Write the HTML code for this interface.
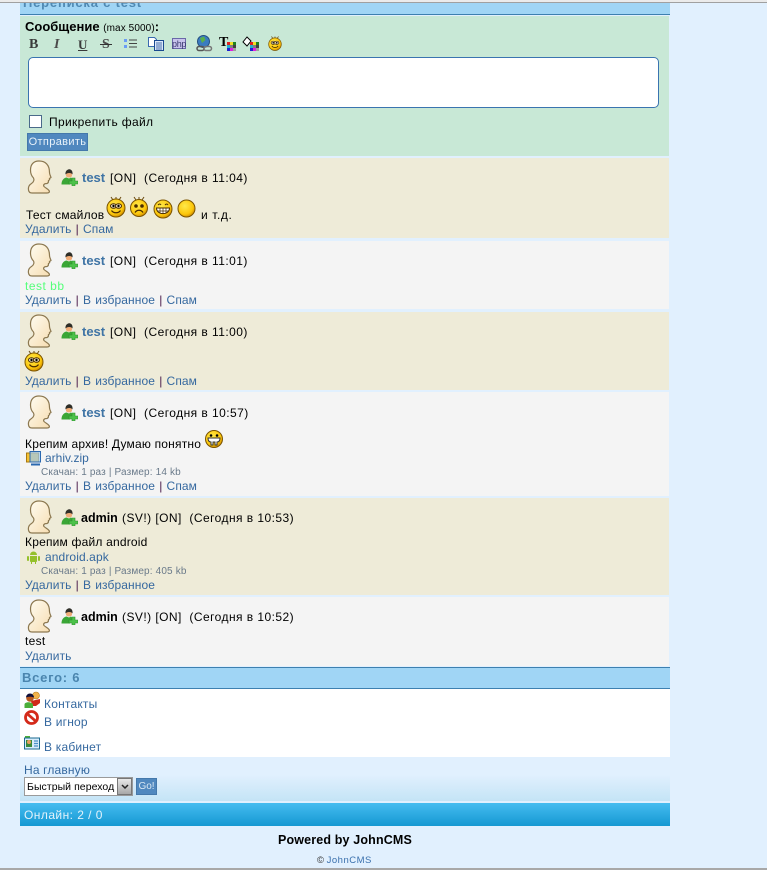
<!DOCTYPE html>
<html lang="ru"><head><meta charset="utf-8"><title>Переписка</title>
<style>
html,body{margin:0;padding:0;}
body{width:767px;height:870px;position:relative;overflow:hidden;background:#e1f0fe;font-family:"Liberation Sans","DejaVu Sans",sans-serif;font-size:12px;color:#000;}
.b{position:absolute;}
.t{position:absolute;white-space:nowrap;line-height:14px;}
a,.l{color:#35689f;text-decoration:none;}
.s{color:#4a1a4a;}
svg{position:absolute;overflow:visible;}
.n{font-weight:bold;}
.d{letter-spacing:.45px;}
.m{letter-spacing:.1px;word-spacing:.7px;}
.f{font-size:10px;color:#6a7a8a;letter-spacing:.15px;}
</style></head><body>
<svg width="0" height="0" style="position:absolute"><defs>
<radialGradient id="y" cx=".4" cy=".35" r=".7"><stop offset="0" stop-color="#ffe94a"/><stop offset=".7" stop-color="#fcc60a"/><stop offset="1" stop-color="#c88200"/></radialGradient>
<linearGradient id="av" x1="0" y1="0" x2="1" y2="1"><stop offset="0" stop-color="#fffdf2"/><stop offset="1" stop-color="#f6dcb0"/></linearGradient>
<symbol id="avatar" viewBox="0 0 28 34"><path d="M13 1C7.500 1 4.500 4.500 4.500 10c0 3.500 1 6 3 8 .8 1.500.5 4-2 5.500C3 25 2 27 2.500 30c.3 2 1.500 3 3.500 3h15c2 0 3-1 2-2.500-1-1.500-3.500-2.500-5-4-1-1.500 0-3 3-3 1.500-.5 1.500-1.500 1.500-3 1-.5 1.500-1 1-2l1.500-1c-.3-1.500-1.500-3-1.500-5C23.500 5 19.500 1 13 1z" fill="url(#av)" stroke="#8c7850" stroke-width="1.200"/></symbol>
<symbol id="user" viewBox="0 0 17 17"><path d="M5 2.500C6 .5 10 .5 11 2.500v4.500c-1 2-5 2-6 0z" fill="#f0ac78"/><path d="M4.500 5.500C4 1.500 7 .3 8.500 .3S12 2 11.500 5.500C10.500 3.500 6 3.500 4.500 5.500z" fill="#2e2e28"/><path d="M.5 15.500c0-4 2-6.500 5-7l2.500 1 2-1 2 2v2h-3v3z" fill="#3aa636"/><path d="M11 9h3v3h3v3h-3v2h-3v-2H8v-3h3z" fill="#4cc24a" stroke="#2c8d2c" stroke-width=".6"/></symbol>
<symbol id="sm" viewBox="0 0 20 22"><path d="M7 4L5 1M10 4V1M13 4l2-3" stroke="#6a4a10" fill="none"/><circle cx="10" cy="12" r="9" fill="url(#y)" stroke="#7a5400"/><ellipse cx="7.500" cy="10" rx="3" ry="2.300" fill="#f4e8c8" stroke="#4a2c00"/><ellipse cx="12.500" cy="10" rx="3" ry="2.300" fill="#f4e8c8" stroke="#4a2c00"/><circle cx="7.500" cy="10" r="1.200"/><circle cx="12.500" cy="10" r="1.200"/><path d="M5.500 14.500c2 3 7 3 9 0" stroke="#4a2c00" stroke-width="1.200" fill="none"/></symbol>
</defs></svg>

<!-- page lines -->
<div class="b" style="left:0;top:0;width:767px;height:2px;background:#ebebeb"></div>
<div class="b" style="left:0;top:2px;width:767px;height:1px;background:#a0a0a0"></div>
<div class="b" style="left:0;top:868px;width:767px;height:2px;background:#a8a8a8"></div>

<!-- header -->
<div class="b" style="left:20px;top:3px;width:650px;height:11px;background:#a0d5f5;border-bottom:1px solid #3d80b0;overflow:hidden">
<div class="t n" style="left:3px;top:-7px;color:#4f89b3;font-size:13px;letter-spacing:.8px">Переписка с test</div></div>

<!-- form -->
<div class="b" style="left:20px;top:16px;width:649px;height:140px;background:#c8e8d6"></div>
<div class="t n" style="left:25px;top:20px;font-size:13px;color:#000">Сообщение <span style="font-weight:normal;font-size:10px;letter-spacing:.1px">(max 5000)</span>:</div>
<div class="t" style="left:29px;top:37px;font:bold 14px 'Liberation Serif',serif;color:#3a3a3a">B</div>
<div class="t" style="left:54px;top:37px;font:italic bold 14px 'Liberation Serif',serif;color:#4a4a4a">I</div>
<div class="t" style="left:78px;top:37px;font:bold 13px 'Liberation Serif',serif;color:#3a3a3a;text-decoration:underline">U</div>
<div class="t" style="left:102px;top:37px;font:bold 14px 'Liberation Serif',serif;color:#4a4a4a">S</div>
<div class="b" style="left:100px;top:44px;width:12px;height:1px;background:#333"></div>
<svg style="left:124px;top:38px" width="14" height="12"><rect x="0" y="1" width="3" height="3" fill="#6a9cf5"/><rect x="0" y="7" width="3" height="3" fill="#6a9cf5"/><path d="M5 2h8M5 5.500h8M5 9h8" stroke="#444" fill="none"/></svg>
<svg style="left:148px;top:37px" width="16" height="14"><path d="M.5.500h6l2 2v7h-8z" fill="#fff" stroke="#3a6ab0"/><rect x="6.500" y="3.500" width="9" height="10" fill="#dce8fa" stroke="#1a4a90"/><path d="M8 6h6M8 8h6M8 10h6M8 12h6" stroke="#1a4a90" stroke-width=".8"/></svg>
<svg style="left:172px;top:38px" width="14" height="12"><rect x=".5" y=".5" width="13" height="10" fill="#c8c4ec" stroke="#6a68a8"/></svg>
<div class="t" style="left:172px;top:37px;font-size:9px;color:#3a3a70;letter-spacing:-.3px">php</div>
<svg style="left:196px;top:35px" width="17" height="17"><circle cx="7.500" cy="6.500" r="6" fill="#3a7cc0" stroke="#245080"/><path d="M4 3l4-1.500 1.500 3.500-3.500 3z" fill="#5ab04a"/><rect x="1" y="11.500" width="7" height="4" rx="2" fill="none" stroke="#555" stroke-width="1.500"/><rect x="8" y="11.500" width="7.500" height="4" rx="2" fill="none" stroke="#777" stroke-width="1.500"/></svg>
<div class="t" style="left:219px;top:35px;font:bold 14px 'Liberation Serif',serif;color:#000">T</div>
<svg style="left:227px;top:42px" width="9" height="9"><rect width="3" height="3" x="0" y="0" fill="#e02020"/><rect width="3" height="3" x="3" y="0" fill="#f0e020"/><rect width="3" height="3" x="6" y="0" fill="#208020"/><rect width="3" height="3" x="0" y="3" fill="#20b0d0"/><rect width="3" height="3" x="3" y="3" fill="#808080"/><rect width="3" height="3" x="6" y="3" fill="#404040"/><rect width="3" height="3" x="0" y="6" fill="#2020d0"/><rect width="3" height="3" x="3" y="6" fill="#e020e0"/><rect width="3" height="3" x="6" y="6" fill="#a0a0a0"/></svg>
<svg style="left:243px;top:36px" width="9" height="12"><path d="M4 1L0 6l4 4 4-5z" fill="#fff" stroke="#000"/></svg>
<svg style="left:250px;top:42px" width="9" height="9"><rect width="3" height="3" x="0" y="0" fill="#e02020"/><rect width="3" height="3" x="3" y="0" fill="#f0e020"/><rect width="3" height="3" x="6" y="0" fill="#208020"/><rect width="3" height="3" x="0" y="3" fill="#20b0d0"/><rect width="3" height="3" x="3" y="3" fill="#808080"/><rect width="3" height="3" x="6" y="3" fill="#404040"/><rect width="3" height="3" x="0" y="6" fill="#2020d0"/><rect width="3" height="3" x="3" y="6" fill="#e020e0"/><rect width="3" height="3" x="6" y="6" fill="#a0a0a0"/></svg>
<svg style="left:268px;top:35px" width="14" height="17"><use href="#sm" width="14" height="17"/></svg>
<div class="b" style="left:28px;top:57px;width:629px;height:49px;background:#fff;border:1px solid #3a74b0;border-radius:5px"></div>
<div class="b" style="left:29px;top:115px;width:11px;height:11px;background:#fff;border:1px solid #4a6a8a"></div>
<div class="t" style="left:49px;top:115px;letter-spacing:.35px">Прикрепить файл</div>
<div class="b" style="left:27px;top:133px;width:61px;height:18px;background:#5088bf;border:1px solid #4478ab;box-sizing:border-box;color:#e8f2fa;font-size:11px;line-height:16px;text-align:center;letter-spacing:.35px">Отправить</div>

<!-- items -->
<div class="b" style="left:20px;top:158px;width:649px;height:80px;background:#eeebd8"></div>
<div class="b" style="left:20px;top:241px;width:649px;height:68px;background:#f4f4f4"></div>
<div class="b" style="left:20px;top:312px;width:649px;height:78px;background:#eeebd8"></div>
<div class="b" style="left:20px;top:392px;width:649px;height:104px;background:#f4f4f4"></div>
<div class="b" style="left:20px;top:498px;width:649px;height:97px;background:#eeebd8"></div>
<div class="b" style="left:20px;top:597px;width:649px;height:69px;background:#f4f4f4"></div>

<!-- item 1 -->
<svg style="left:26px;top:160px" width="28" height="34"><use href="#avatar" width="28" height="34"/></svg>
<svg style="left:61px;top:169px" width="17" height="17"><use href="#user" width="17" height="17"/></svg>
<div class="t n l" style="left:82px;top:171px;font-size:13px;color:#3f74a5">test</div>
<div class="t d" style="left:110px;top:171px">[ON]&nbsp; (Сегодня в 11:04)</div>
<div class="t" style="left:26px;top:208px;letter-spacing:.2px">Тест смайлов</div>
<svg style="left:106px;top:196px" width="20" height="22"><use href="#sm" width="20" height="22"/></svg>
<svg style="left:129px;top:196px" width="20" height="22"><path d="M7 4L5 1M10 4V1M13 4l2-3" stroke="#6a4a10" fill="none"/><circle cx="10" cy="12" r="8.500" fill="url(#y)" stroke="#7a5400"/><circle cx="7" cy="10" r="1.800" fill="#4a2c00"/><circle cx="13" cy="10" r="1.800" fill="#4a2c00"/><path d="M6 16.500c2-3 6-3 8 0" stroke="#4a2c00" stroke-width="1.200" fill="none"/></svg>
<svg style="left:153px;top:199px" width="20" height="20"><circle cx="10" cy="10" r="9" fill="url(#y)" stroke="#7a5400"/><path d="M3.500 9h13c0 7.500-13 7.500-13 0z" fill="#fff" stroke="#4a2c00"/><path d="M7 9v5M10 9v6M13 9v5M4 12h12" stroke="#4a2c00" stroke-width=".7"/><path d="M5 6q2-2 3 0M12 6q2-2 3 0" stroke="#4a2c00" fill="none"/></svg>
<svg style="left:177px;top:199px" width="19" height="19"><circle cx="9.500" cy="9.500" r="8.500" fill="url(#y)" stroke="#7a5400"/></svg>
<div class="t" style="left:201px;top:208px;letter-spacing:.6px">и т.д.</div>
<div class="t m" style="left:25px;top:222px"><a>Удалить</a> <span class="s">|</span> <a>Спам</a></div>

<!-- item 2 -->
<svg style="left:26px;top:243px" width="28" height="34"><use href="#avatar" width="28" height="34"/></svg>
<svg style="left:61px;top:252px" width="17" height="17"><use href="#user" width="17" height="17"/></svg>
<div class="t n" style="left:82px;top:254px;font-size:13px;color:#3f74a5">test</div>
<div class="t d" style="left:110px;top:254px">[ON]&nbsp; (Сегодня в 11:01)</div>
<div class="t" style="left:25px;top:279px;color:#55ff7a;letter-spacing:.5px">test bb</div>
<div class="t m" style="left:25px;top:293px"><a>Удалить</a> <span class="s">|</span> <a>В избранное</a> <span class="s">|</span> <a>Спам</a></div>

<!-- item 3 -->
<svg style="left:26px;top:314px" width="28" height="34"><use href="#avatar" width="28" height="34"/></svg>
<svg style="left:61px;top:323px" width="17" height="17"><use href="#user" width="17" height="17"/></svg>
<div class="t n" style="left:82px;top:325px;font-size:13px;color:#3f74a5">test</div>
<div class="t d" style="left:110px;top:325px">[ON]&nbsp; (Сегодня в 11:00)</div>
<svg style="left:24px;top:350px" width="20" height="22"><use href="#sm" width="20" height="22"/></svg>
<div class="t m" style="left:25px;top:374px"><a>Удалить</a> <span class="s">|</span> <a>В избранное</a> <span class="s">|</span> <a>Спам</a></div>

<!-- item 4 -->
<svg style="left:26px;top:395px" width="28" height="34"><use href="#avatar" width="28" height="34"/></svg>
<svg style="left:61px;top:404px" width="17" height="17"><use href="#user" width="17" height="17"/></svg>
<div class="t n" style="left:82px;top:406px;font-size:13px;color:#3f74a5">test</div>
<div class="t d" style="left:110px;top:406px">[ON]&nbsp; (Сегодня в 10:57)</div>
<div class="t" style="left:25px;top:437px;letter-spacing:.2px">Крепим архив! Думаю понятно</div>
<svg style="left:205px;top:430px" width="18" height="18"><circle cx="9" cy="9" r="8.500" fill="url(#y)" stroke="#7a5400"/><path d="M3 8h12c0 3-1.500 4-3 4v3h-2v-3H8v3H6v-3c-1.500 0-3-1-3-4z" fill="#fff" stroke="#333"/><path d="M6 5.500h.1M12 5.500h.1" stroke="#000" stroke-width="2.500" stroke-linecap="round"/></svg>
<svg style="left:26px;top:451px" width="16" height="16"><rect x=".5" y="2" width="12" height="9" fill="#f5c030" stroke="#a87810"/><rect x="4" y=".5" width="10.500" height="10.500" fill="#9ccaf4" stroke="#2a68b0" fill-opacity=".7"/><path d="M5 13.500h9" stroke="#2a68b0" stroke-width="2"/></svg>
<div class="t" style="left:45px;top:451px"><a>arhiv.zip</a></div>
<div class="t f" style="left:41px;top:466px">Скачан: 1 раз | Размер: 14 kb</div>
<div class="t m" style="left:25px;top:479px"><a>Удалить</a> <span class="s">|</span> <a>В избранное</a> <span class="s">|</span> <a>Спам</a></div>

<!-- item 5 -->
<svg style="left:26px;top:500px" width="28" height="34"><use href="#avatar" width="28" height="34"/></svg>
<svg style="left:61px;top:509px" width="17" height="17"><use href="#user" width="17" height="17"/></svg>
<div class="t n" style="left:81px;top:511px;font-size:12.500px;color:#000">admin</div>
<div class="t d" style="left:122px;top:511px">(SV!) [ON]&nbsp; (Сегодня в 10:53)</div>
<div class="t" style="left:25px;top:535px;letter-spacing:.2px">Крепим файл android</div>
<svg style="left:27px;top:550px" width="13" height="14"><path d="M3 5a3.500 3.500 0 0 1 7 0z" fill="#94c02a"/><path d="M3 6h7v5c0 1-1 1-1 1v2H8v-2H5v2H4v-2s-1 0-1-1z" fill="#94c02a"/><rect x="0" y="6" width="2" height="5" rx="1" fill="#94c02a"/><rect x="11" y="6" width="2" height="5" rx="1" fill="#94c02a"/></svg>
<div class="t" style="left:45px;top:550px;letter-spacing:.1px"><a>android.apk</a></div>
<div class="t f" style="left:41px;top:565px">Скачан: 1 раз | Размер: 405 kb</div>
<div class="t m" style="left:25px;top:578px"><a>Удалить</a> <span class="s">|</span> <a>В избранное</a></div>

<!-- item 6 -->
<svg style="left:26px;top:599px" width="28" height="34"><use href="#avatar" width="28" height="34"/></svg>
<svg style="left:61px;top:608px" width="17" height="17"><use href="#user" width="17" height="17"/></svg>
<div class="t n" style="left:81px;top:610px;font-size:12.500px;color:#000">admin</div>
<div class="t d" style="left:122px;top:610px">(SV!) [ON]&nbsp; (Сегодня в 10:52)</div>
<div class="t" style="left:25px;top:634px;letter-spacing:.3px">test</div>
<div class="t m" style="left:25px;top:649px"><a>Удалить</a></div>

<!-- total -->
<div class="b" style="left:20px;top:667px;width:650px;height:20px;background:#a0d5f5;border-top:1px solid #3d80b0;border-bottom:1px solid #3d80b0"></div>
<div class="t n" style="left:22px;top:671px;font-size:13px;color:#4a85ae;letter-spacing:.75px">Всего: 6</div>

<!-- menu -->
<div class="b" style="left:20px;top:689px;width:650px;height:68px;background:#fff"></div>
<svg style="left:24px;top:692px" width="16" height="16"><circle cx="12" cy="3.500" r="3.500" fill="#f2b44a" stroke="#b07a20" stroke-width=".6"/><path d="M7 9l9-2v4l-4 3H8z" fill="#d02a1a"/><circle cx="6" cy="6" r="3.800" fill="#b85a20"/><path d="M2 5.500a4 4 0 0 1 8 0c-2-1-6-1-8 0z" fill="#10103a"/><path d="M.5 16v-3.500c0-3 7.500-3 8.500 0V16z" fill="#4cae3a"/></svg>
<div class="t" style="left:44px;top:697px;letter-spacing:.2px"><a>Контакты</a></div>
<svg style="left:24px;top:710px" width="15" height="15"><circle cx="7.500" cy="7.500" r="6" fill="#fff" stroke="#d42a1a" stroke-width="2.800"/><path d="M3.500 4l8 7" stroke="#d42a1a" stroke-width="2.800"/></svg>
<div class="t" style="left:44px;top:715px;letter-spacing:.2px"><a>В игнор</a></div>
<svg style="left:24px;top:735px" width="16" height="15"><path d="M1 1h5v3H1z" fill="#4cae3a"/><rect x=".5" y="3" width="15" height="11" fill="#d8ecfa" stroke="#1a6a90"/><rect x="2" y="5" width="6" height="7" fill="#3a8a3a"/><circle cx="5" cy="7" r="2" fill="#e8a060"/><path d="M10 6h4M10 8.500h4M10 11h4" stroke="#4a90c8" stroke-width="1.200"/></svg>
<div class="t" style="left:44px;top:740px;letter-spacing:.2px"><a>В кабинет</a></div>

<!-- footer block -->
<div class="b" style="left:20px;top:757px;width:650px;height:44px;background:linear-gradient(#e1f0fe 0%,#e1f0fe 40%,#c4e4f6 100%)"></div>
<div class="t" style="left:24px;top:763px;letter-spacing:.15px"><a>На главную</a></div>
<div class="b" style="left:24px;top:777px;width:109px;height:19px;background:#fff;border:1px solid #9a9a9a;box-sizing:border-box"></div>
<div class="t" style="left:27px;top:780px;font-size:10.500px;color:#000;letter-spacing:.05px">Быстрый переход</div>
<div class="b" style="left:117px;top:778px;width:15px;height:17px;background:linear-gradient(#e8e8e8,#a8a8a8);border:1px solid #777;box-sizing:border-box"></div>
<svg style="left:121px;top:784px" width="8" height="6"><path d="M1 1l3 3 3-3" stroke="#222" stroke-width="1.500" fill="none"/></svg>
<div class="b" style="left:136px;top:778px;width:21px;height:17px;background:#5088bf;border:1px solid #4478ab;box-sizing:border-box;color:#d8e8f4;font-size:10px;line-height:15px;text-align:center">Go!</div>

<!-- online -->
<div class="b" style="left:20px;top:803px;width:650px;height:23px;background:linear-gradient(#45bcf0,#1598d2)"></div>
<div class="t" style="left:24px;top:808px;color:#e2f2fb;letter-spacing:.45px">Онлайн: 2 / 0</div>

<!-- bottom -->
<div class="t n" style="left:278px;top:833px;font-size:12.500px;color:#000;letter-spacing:.15px">Powered by JohnCMS</div>
<div class="t" style="left:317px;top:854px;font-size:9.500px;color:#333">© <span style="color:#3a70ad;letter-spacing:.5px">JohnCMS</span></div>
</body></html>
